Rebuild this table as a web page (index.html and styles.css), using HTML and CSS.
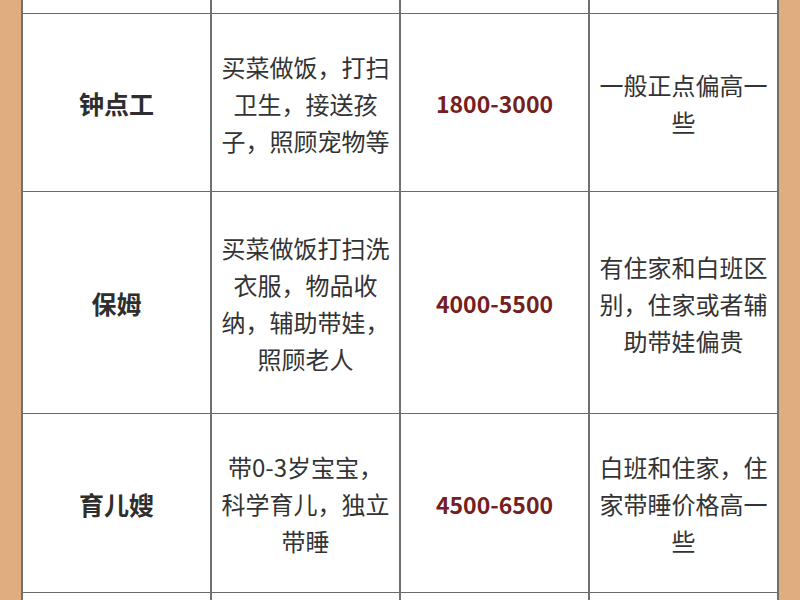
FILE: index.html
```html
<!DOCTYPE html>
<html lang="zh-CN">
<head>
<meta charset="utf-8">
<link rel="stylesheet" href="styles.css">
</head>
<body>
<div class="sheet">
<table class="grid">
<colgroup><col><col><col><col></colgroup>
<tr class="r-top"><td></td><td></td><td></td><td></td></tr>
<tr class="r-a">
<td class="role">钟点工</td>
<td class="desc">买菜做饭，打扫卫生，接送孩子，照顾宠物等</td>
<td class="price">1800-3000</td>
<td class="desc">一般正点偏高一些</td>
</tr>
<tr class="r-b">
<td class="role">保姆</td>
<td class="desc">买菜做饭打扫洗衣服，物品收纳，辅助带娃，照顾老人</td>
<td class="price">4000-5500</td>
<td class="desc">有住家和白班区别，住家或者辅助带娃偏贵</td>
</tr>
<tr class="r-c">
<td class="role">育儿嫂</td>
<td class="desc">带0-3岁宝宝，科学育儿，独立带睡</td>
<td class="price">4500-6500</td>
<td class="desc">白班和住家，住家带睡价格高一些</td>
</tr>
<tr class="r-end"><td></td><td></td><td></td><td></td></tr>
</table>
</div>
</body>
</html>
```
FILE: styles.css
```css
html, body {
  margin: 0;
  padding: 0;
  height: 600px;
  overflow: hidden;
  background: #dfad7f;
}
.sheet {
  margin: 0 21px 0 21px;
  background: #ffffff;
  height: 600px;
  overflow: hidden;
}
.grid {
  width: 758px;
  table-layout: fixed;
  border-collapse: collapse;
  font-family: "Noto Sans CJK SC", "Noto Sans", sans-serif;
  color: #333333;
}
.grid td {
  border-top: 1px solid #6a6a6a;
  border-bottom: 1px solid #6a6a6a;
  border-left: 2px solid #707070;
  border-right: 2px solid #707070;
  text-align: center;
  vertical-align: middle;
  padding: 1px 9px 0 9px;
}
.r-top td {
  border-top: none;
  height: 13px;
  padding: 0;
}
.r-a { height: 178px; }
.r-b { height: 222px; }
.r-c { height: 179px; }
.r-end { height: 60px; }
.role {
  font-size: 25px;
  font-weight: 700;
  color: #2e2e2e;
}
.desc {
  font-size: 24px;
  line-height: 37px;
}
.price {
  font-size: 23px;
  font-weight: 700;
  color: #742020;
}
```
